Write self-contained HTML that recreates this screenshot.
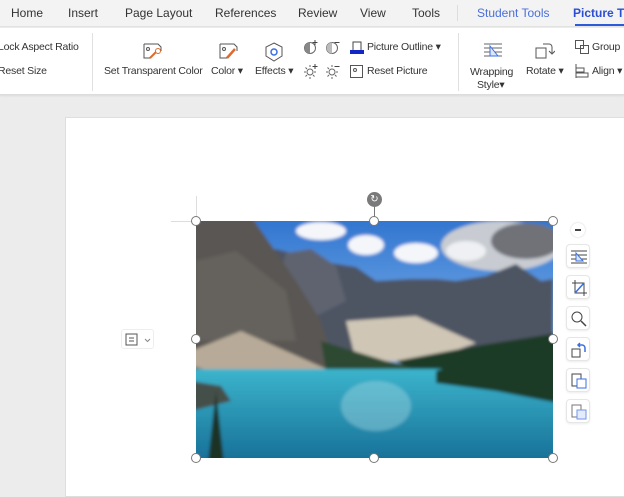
<!DOCTYPE html>
<html><head><meta charset="utf-8"><style>
*{margin:0;padding:0;box-sizing:border-box}
body{width:624px;height:480px;overflow:hidden;background:#ececec;font-family:"Liberation Sans",sans-serif;position:relative;color:#333}
.tabs{position:absolute;left:0;top:0;width:624px;height:27px;background:#f3f3f3;border-bottom:1px solid #e2e2e2;overflow:hidden}
.tabs span{position:absolute;top:6px;font-size:12px;color:#333;white-space:nowrap}
.rib{position:absolute;left:0;top:28px;width:624px;height:67px;background:#fff;border-bottom:1px solid #dcdcdc;box-shadow:0 1px 2px rgba(0,0,0,.08);overflow:hidden}
.t{position:absolute;font-size:10.5px;letter-spacing:-0.2px;color:#333;white-space:nowrap}
.sep{position:absolute;top:5px;width:1px;height:58px;background:#e0e0e0}
.page{position:absolute;left:65px;top:117px;width:570px;height:380px;background:#fff;border:1px solid #dedede}
.h{position:absolute;width:10px;height:10px;border-radius:50%;background:#fff;border:1px solid #777}
.sb{position:absolute;left:566px;width:24px;height:24px;background:#fff;border:1px solid #e6e6e6;border-radius:4px;box-shadow:0 1px 2px rgba(0,0,0,.08)}
</style></head><body>
<div class="tabs">
<span style="left:11px">Home</span><span style="left:68px">Insert</span><span style="left:125px">Page Layout</span><span style="left:215px">References</span><span style="left:298px">Review</span><span style="left:360px">View</span><span style="left:412px">Tools</span>
<div style="position:absolute;left:457px;top:5px;width:1px;height:16px;background:#ddd"></div>
<span style="left:477px;color:#4a6fd8">Student Tools</span><span style="left:573px;color:#2b4fd0;font-weight:bold">Picture Tools</span>
<div style="position:absolute;left:575px;top:24px;width:49px;height:2px;background:#2b5bd8"></div>
</div>
<div class="rib">
<span class="t" style="left:-2px;top:13px">Lock Aspect Ratio</span>
<span class="t" style="left:-2px;top:37px">Reset Size</span>
<div class="sep" style="left:92px"></div>
<svg style="position:absolute;left:143px;top:14px" width="20" height="18"><path d="M1 2h14l3 3v4M1 2v14h7" stroke="#555" fill="none"/><circle cx="5" cy="7" r="1.5" stroke="#555" fill="none"/><path d="M7 16l6-6" stroke="#e06a2c" stroke-width="2"/><circle cx="15" cy="9" r="2.5" stroke="#e06a2c" fill="none"/></svg>
<span class="t" style="left:104px;top:37px">Set Transparent Color</span>
<svg style="position:absolute;left:219px;top:14px" width="20" height="18"><path d="M1 2h14l3 3v4M1 2v14h7" stroke="#555" fill="none"/><circle cx="5" cy="7" r="1.5" stroke="#555" fill="none"/><path d="M8 16l8-9" stroke="#e06a2c" stroke-width="2.5"/></svg>
<span class="t" style="left:211px;top:37px">Color ▾</span>
<svg style="position:absolute;left:265px;top:14px" width="18" height="20"><path d="M9 1l8 4v9l-8 5-8-5V5z" stroke="#555" fill="none"/><circle cx="9" cy="10" r="3" stroke="#3b6fe0" fill="none" stroke-width="1.5"/></svg>
<span class="t" style="left:255px;top:37px">Effects ▾</span>
<svg style="position:absolute;left:303px;top:11px" width="16" height="16"><circle cx="7" cy="9" r="5.5" stroke="#666" fill="#fff"/><path d="M7 3.5a5.5 5.5 0 0 0 0 11z" fill="#888"/><path d="M12 1v5M9.5 3.5h5" stroke="#444"/></svg>
<svg style="position:absolute;left:325px;top:11px" width="16" height="16"><circle cx="7" cy="9" r="5.5" stroke="#666" fill="#fff"/><path d="M7 3.5a5.5 5.5 0 0 0 0 11z" fill="#bbb"/><path d="M9.5 3.5h5" stroke="#444"/></svg>
<svg style="position:absolute;left:303px;top:35px" width="16" height="16"><circle cx="7" cy="9" r="3" stroke="#666" fill="none"/><path d="M7 2v2M7 14v2M1 9h2M11 9h2M2.5 4.5l1.5 1.5M10 12l1.5 1.5M2.5 13.5l1.5-1.5" stroke="#666"/><path d="M12 1v5M9.5 3.5h5" stroke="#444"/></svg>
<svg style="position:absolute;left:325px;top:35px" width="16" height="16"><circle cx="7" cy="9" r="3" stroke="#666" fill="none"/><path d="M7 2v2M7 14v2M1 9h2M11 9h2M2.5 4.5l1.5 1.5M10 12l1.5 1.5M2.5 13.5l1.5-1.5" stroke="#666"/><path d="M9.5 3.5h5" stroke="#444"/></svg>
<svg style="position:absolute;left:350px;top:12px" width="14" height="14"><path d="M3 10V2h8v8" stroke="#444" fill="none"/><rect x="0" y="10" width="14" height="4" fill="#1226c8"/></svg>
<span class="t" style="left:367px;top:13px">Picture Outline ▾</span>
<svg style="position:absolute;left:350px;top:37px" width="14" height="14"><rect x=".5" y=".5" width="12" height="12" stroke="#555" fill="none"/><circle cx="5" cy="5" r="1.5" stroke="#555" fill="none"/></svg>
<span class="t" style="left:367px;top:37px">Reset Picture</span>
<div class="sep" style="left:458px"></div>
<svg style="position:absolute;left:483px;top:15px" width="20" height="16"><path d="M1 1h18M1 5h18M1 9h18M1 13h18" stroke="#666"/><path d="M7 3l8 10H7z" stroke="#3b6fe0" fill="#dce6fb"/></svg>
<span class="t" style="left:470px;top:38px">Wrapping</span>
<span class="t" style="left:477px;top:51px">Style▾</span>
<svg style="position:absolute;left:535px;top:14px" width="20" height="18"><rect x="1" y="6" width="10" height="10" stroke="#555" fill="none"/><path d="M8 2h6a3 3 0 0 1 3 3v6m-3-2l3 3 3-3" stroke="#555" fill="none"/></svg>
<span class="t" style="left:526px;top:37px">Rotate ▾</span>
<svg style="position:absolute;left:575px;top:12px" width="14" height="14"><rect x=".5" y=".5" width="8" height="8" stroke="#555" fill="none"/><rect x="5.5" y="5.5" width="8" height="8" stroke="#555" fill="none"/></svg>
<span class="t" style="left:592px;top:13px">Group</span>
<svg style="position:absolute;left:575px;top:36px" width="14" height="14"><path d="M1 0v14M1 4h8v4H1M1 9h12v4H1" stroke="#555" fill="none"/></svg>
<span class="t" style="left:592px;top:37px">Align ▾</span>
</div>
<div class="page"></div>
<div style="position:absolute;left:171px;top:221px;width:25px;height:1px;background:#ddd"></div>
<div style="position:absolute;left:196px;top:196px;width:1px;height:25px;background:#ddd"></div>
<svg style="position:absolute;left:196px;top:221px" width="357" height="237" viewBox="0 0 357 237" preserveAspectRatio="none">
<defs><linearGradient id="sky" x1="0" y1="0" x2="0" y2="1"><stop offset="0" stop-color="#2f74cf"/><stop offset="1" stop-color="#8fbff0"/></linearGradient>
<linearGradient id="lake" x1="0" y1="0" x2="0" y2="1"><stop offset="0" stop-color="#3cb4cc"/><stop offset="1" stop-color="#166e96"/></linearGradient>
<filter id="b"><feGaussianBlur stdDeviation="1.5"/></filter></defs>
<g filter="url(#b)">
<rect x="-5" y="-5" width="367" height="160" fill="url(#sky)"/>
<ellipse cx="125" cy="10" rx="25" ry="9" fill="#f4f6fa"/>
<ellipse cx="170" cy="24" rx="18" ry="10" fill="#f4f6fa"/>
<ellipse cx="220" cy="32" rx="22" ry="10" fill="#f4f6fa"/>
<ellipse cx="305" cy="25" rx="60" ry="25" fill="#c8ccd2"/>
<ellipse cx="330" cy="20" rx="35" ry="18" fill="#6f7278"/>
<ellipse cx="270" cy="30" rx="20" ry="10" fill="#eef0f3"/>
<polygon points="25,45 80,28 135,42 160,46 180,60 215,58 240,58 260,60 290,55 320,43 345,60 357,58 357,120 250,130 150,130 60,120" fill="#4d5563"/>
<polygon points="90,32 115,28 140,45 150,80 110,100 80,70" fill="#5e6470"/>
<polygon points="150,100 220,95 280,122 230,140 160,140" fill="#cfc6b6"/>
<polygon points="-5,-5 55,-5 100,60 125,100 140,150 -5,195" fill="#5a5652"/>
<polygon points="0,40 40,30 90,70 100,120 0,120" fill="#6a6862" opacity=".7"/>
<polygon points="45,110 135,150 130,158 60,160 -5,145 -5,130" fill="#b7aa98"/>
<polygon points="125,120 190,140 240,150 130,150" fill="#2d4a30"/>
<polygon points="200,140 280,125 362,112 362,180 260,165 220,150" fill="#1f3b26"/>
<rect x="-5" y="148" width="367" height="95" fill="url(#lake)"/>
<polygon points="240,150 362,115 362,182 300,170 240,162" fill="#1d3a25"/>
<ellipse cx="180" cy="185" rx="35" ry="25" fill="#9fd4e0" opacity=".45"/>
<polygon points="-5,160 25,165 35,180 -5,190" fill="#44504a"/>
<polygon points="20,170 28,242 12,242" fill="#1c3322"/>
</g>
</svg>
<div class="h" style="left:191px;top:216px"></div><div class="h" style="left:369px;top:216px"></div><div class="h" style="left:548px;top:216px"></div>
<div class="h" style="left:191px;top:334px"></div><div class="h" style="left:548px;top:334px"></div>
<div class="h" style="left:191px;top:453px"></div><div class="h" style="left:369px;top:453px"></div><div class="h" style="left:548px;top:453px"></div>
<div style="position:absolute;left:374px;top:205px;width:1px;height:12px;background:#777"></div>
<div style="position:absolute;left:367px;top:192px;width:15px;height:15px;border-radius:50%;background:#7a7a7a;color:#fff;font-size:10px;text-align:center;line-height:15px">↻</div>
<div style="position:absolute;left:121px;top:329px;width:33px;height:20px;background:#fff;border:1px solid #eee;border-radius:3px"><svg width="33" height="20"><rect x="4" y="4" width="11" height="11" stroke="#555" fill="none"/><path d="M7 8h5M7 11h5" stroke="#555"/><path d="M23 9l2.5 2.5L28 9" stroke="#888" fill="none"/></svg></div>
<div style="position:absolute;left:571px;top:223px;width:14px;height:14px;border-radius:50%;background:#fff;box-shadow:0 0 2px rgba(0,0,0,.2)"><div style="position:absolute;left:4px;top:6px;width:6px;height:1.5px;background:#444"></div></div>
<div class="sb" style="top:244px"><svg width="24" height="24"><path d="M4 6h16M4 10h16M4 14h16M4 18h16" stroke="#444"/><path d="M9 8l7 8H9z" stroke="#3b6fe0" fill="#dce6fb"/></svg></div>
<div class="sb" style="top:275px"><svg width="24" height="24"><path d="M8 4v13h12M5 7h12v13" stroke="#444" fill="none"/><path d="M8 17L17 7" stroke="#3b6fe0" stroke-width="1.5"/></svg></div>
<div class="sb" style="top:306px"><svg width="24" height="24"><circle cx="10" cy="10" r="5" stroke="#444" fill="none"/><path d="M14 14l5 5" stroke="#444" stroke-width="1.5"/></svg></div>
<div class="sb" style="top:337px"><svg width="24" height="24"><rect x="5" y="11" width="8" height="8" stroke="#444" fill="none"/><path d="M11 7h4a3 3 0 0 1 3 3v4M13 5l-2 2 2 2" stroke="#3b6fe0" fill="none" stroke-width="1.5"/></svg></div>
<div class="sb" style="top:368px"><svg width="24" height="24"><rect x="5" y="5" width="9" height="12" stroke="#444" fill="none"/><rect x="10" y="10" width="9" height="9" stroke="#3b6fe0" fill="#fff"/></svg></div>
<div class="sb" style="top:399px"><svg width="24" height="24"><rect x="5" y="5" width="9" height="12" stroke="#777" fill="none"/><rect x="10" y="10" width="9" height="9" stroke="#6f95ec" fill="#e4ecfc"/></svg></div>
</body></html>
